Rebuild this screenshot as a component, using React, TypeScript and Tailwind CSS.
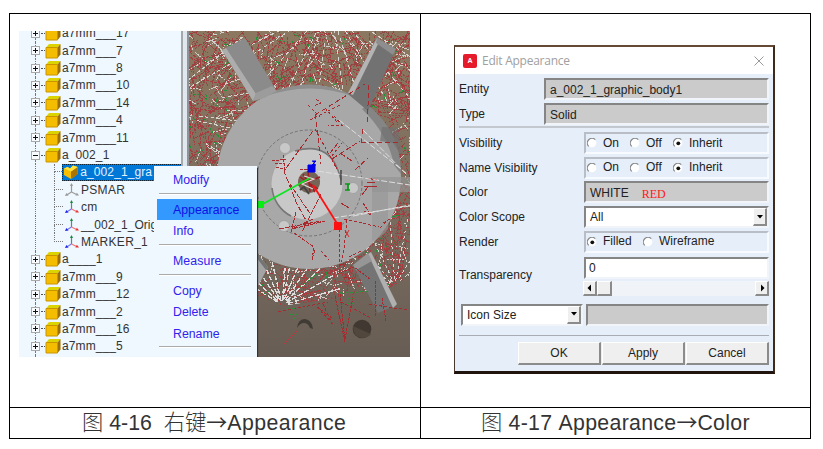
import React from 'react';

const ARIAL = "font-['Liberation_Sans',Arial,sans-serif]";

/* ---------- model tree ---------- */

function PartIcon() {
  return (
    <svg className="h-4 w-4 shrink-0" viewBox="0 0 16 16">
      <path d="M1 4.5 4 1h11.5L12.500 4.500z" fill="#dcd400" />
      <path d="M12.500 4.500 15.500 1v10.500l-3 3.500z" fill="#9c7000" />
      <path d="M1 4.500h11.500V15H1z" fill="#f5bd00" stroke="#c99400" strokeWidth="1" />
    </svg>
  );
}

function SolidIcon() {
  return (
    <svg className="h-4 w-4 shrink-0" viewBox="0 0 16 16">
      <path d="M1 4.500 4.500 3 7 4.500 10 1.500 14.500 3v7L8 15 1 11z" fill="#f8bf00" />
      <path d="M8 7.500 14.500 3v7.500L8 15z" fill="#a97400" />
      <path d="M1 4.500 4.500 3 7 4.500 10 1.500 14.500 3 8 7.500z" fill="#ffe23a" />
    </svg>
  );
}

function AxesIcon({ muted = false }: { muted?: boolean }) {
  return (
    <svg className="h-4 w-4 shrink-0" viewBox="0 0 16 16" fill="none" strokeWidth="1.2">
      <path d="M7.500 10V2" stroke={muted ? '#9a9a9a' : '#3c9a78'} />
      <path d="M6 4 7.500 1 9 4z" fill={muted ? '#999' : '#168a3a'} />
      <path d="M7.500 10 3 12.800" stroke={muted ? '#9a9a9a' : '#7777ee'} />
      <path d="M1 14l1.300-3L4.600 13.500z" fill={muted ? '#999' : '#2222ee'} />
      <path d="M7.500 10l5 2.500" stroke={muted ? '#9a9a9a' : '#ee7777'} />
      <path d="M15 13.500l-3.600 0 1.500-2.700z" fill={muted ? '#999' : '#ee3030'} />
    </svg>
  );
}

function PartRow({ name, open = false }: { name: string; open?: boolean }) {
  return (
    <div className="flex h-[17.4px] shrink-0 items-center">
      <div className="flex h-full w-[34px] items-center pl-[12px]">
        <div className="flex h-full w-[9px] flex-col items-center">
          <div className="w-px flex-1 border-l border-dotted border-[#777]" />
          <svg className="h-[9px] w-[9px] shrink-0" viewBox="0 0 9 9" shapeRendering="crispEdges">
            <path d="M.5.5h8v8h-8z" fill="#f8fbff" stroke="#aaa" />
            <path d={open ? 'M2 4.500h5' : 'M2 4.500h5M4.500 2v5'} stroke="#111" />
          </svg>
          <div className="w-px flex-1 border-l border-dotted border-[#777]" />
        </div>
        <div className="ml-px w-[4px] border-t border-dotted border-[#555]" />
      </div>
      <div className="-ml-[8px] flex w-[17px]"><PartIcon /></div>
      <span className="whitespace-pre pt-px tracking-[0.1px]">{name}</span>
    </div>
  );
}

function ChildRow({ name, kind, last = false }: { name: string; kind: 'solid' | 'muted' | 'axes'; last?: boolean }) {
  return (
    <div className="flex h-[17.4px] shrink-0 items-center">
      <div className="ml-[16px] h-full w-[19px] border-l border-dotted border-[#777]" />
      <div className="flex h-full w-[9px] flex-col">
        <div className="h-1/2 border-b border-l border-dotted border-[#777]" />
        <div className={last ? 'h-1/2' : 'h-1/2 border-l border-dotted border-[#777]'} />
      </div>
      {kind === 'solid' ? (
        <div className="flex h-[17px] w-[122px] items-center border border-dotted border-[#123] bg-[#0078d7] text-[#e4f1ff]">
          <SolidIcon />
          <span className="whitespace-pre pt-px pl-px tracking-[0.1px]">{name}</span>
        </div>
      ) : (
        <>
          <div className="ml-px flex w-[17px]"><AxesIcon muted={kind === 'muted'} /></div>
          <span className={`whitespace-pre pt-px ${name.startsWith('__') ? 'tracking-normal' : 'tracking-[0.3px]'}`}>{name}</span>
        </>
      )}
    </div>
  );
}

function ModelTree() {
  return (
    <div className="h-full w-[162px] shrink-0 overflow-hidden bg-[#eff7ff]">
      <div className="-mt-[6.4px] flex flex-col text-[12px] leading-[17px] text-[#333]">
        <PartRow name="a7mm___17" />
        <PartRow name="a7mm___7" />
        <PartRow name="a7mm___8" />
        <PartRow name="a7mm___10" />
        <PartRow name="a7mm___14" />
        <PartRow name="a7mm___4" />
        <PartRow name="a7mm___11" />
        <PartRow name="a_002_1" open />
        <ChildRow name="a_002_1_gra" kind="solid" />
        <ChildRow name="PSMAR" kind="muted" />
        <ChildRow name="cm" kind="axes" />
        <ChildRow name="__002_1_Orig" kind="axes" />
        <ChildRow name="MARKER_1" kind="axes" last />
        <PartRow name="a____1" />
        <PartRow name="a7mm___9" />
        <PartRow name="a7mm___12" />
        <PartRow name="a7mm___2" />
        <PartRow name="a7mm___16" />
        <PartRow name="a7mm___5" />
        <PartRow name="" />
      </div>
    </div>
  );
}

/* ---------- 3D view ---------- */

function makeRandom(seed: number) {
  let s = seed;
  return () => {
    s = (s * 1664525 + 1013904223) % 4294967296;
    return s / 4294967296;
  };
}

function strokes(count: number, seed: number, min: number, max: number) {
  const rnd = makeRandom(seed);
  let d = '';
  for (let i = 0; i < count; i++) {
    const x = 186 + rnd() * 226;
    const y = 29 + rnd() * 280;
    const a = rnd() * Math.PI;
    const l = min + rnd() * (max - min);
    d += `M${x.toFixed(1)} ${y.toFixed(1)}l${(Math.cos(a) * l).toFixed(1)} ${(Math.sin(a) * l).toFixed(1)}`;
  }
  return d;
}

function fan(cx: number, cy: number, from: number, to: number, n: number, r0: number, r1: number) {
  const rnd = makeRandom(n * 31 + 5);
  let d = '';
  for (let i = 0; i < n; i++) {
    const a = ((from + ((to - from) * (i + rnd() * 0.6)) / (n - 1)) * Math.PI) / 180;
    const s = r0 + rnd() * r0;
    d += `M${(cx + Math.cos(a) * s).toFixed(1)} ${(cy + Math.sin(a) * s).toFixed(1)}L${(cx + Math.cos(a) * r1).toFixed(1)} ${(cy + Math.sin(a) * r1).toFixed(1)}`;
  }
  return d;
}

const RED_STROKES = strokes(1300, 7, 4, 24);
const DULL_STROKES = strokes(900, 23, 4, 20);
const WHITE_STROKES = strokes(480, 91, 3, 18);
const GREEN_STROKES = strokes(140, 45, 3, 8);

function ModelView() {
  return (
    <svg className="h-[326px] w-[221px] shrink-0" viewBox="189 31 221 326">
      <defs>
        <linearGradient id="ground" x1="0" y1="0" x2="0" y2="1">
          <stop offset="0" stopColor="#8c7860" />
          <stop offset=".7" stopColor="#75695d" />
          <stop offset="1" stopColor="#685d54" />
        </linearGradient>
        <clipPath id="mesh">
          <path d="M189 31H410V276L388 289 362 293 330 299 282 306 255 294 189 290z" />
        </clipPath>
      </defs>
      <path d="M189 31h221v326H189z" fill="url(#ground)" />
      <g clipPath="url(#mesh)" fill="none" shapeRendering="crispEdges">
        <path d={DULL_STROKES} stroke="#8f4a47" strokeDasharray="2 1" />
        <path d={RED_STROKES} stroke="#a53c40" strokeDasharray="3 1" />
        <path d={WHITE_STROKES} stroke="#d2cbc8" strokeDasharray="2 1" />
        <path d={fan(282, 305, -150, -10, 13, 4, 60)} stroke="#dedede" strokeDasharray="5 2" strokeWidth="1.400" />
        <path d={fan(330, 5, 30, 165, 12, 20, 120)} stroke="#d8d4d2" strokeDasharray="4 3" />
        <path d={fan(150, 110, -40, 30, 9, 40, 120)} stroke="#d8d4d2" strokeDasharray="4 2" />
        <path d={fan(395, 285, -150, -30, 8, 4, 70)} stroke="#d8d4d2" strokeDasharray="3 3" />
        <path d={GREEN_STROKES} stroke="#219337" strokeDasharray="3 1" />
      </g>

      <circle cx="309" cy="177" r="92" fill="#a8a8a8" />
      <path d="M263 97Q310 72 355 97Q310 80 263 97z" fill="#8e8e8e" />
      <path d="M368 105Q401 132 401 174L394 165Q388 134 362 109z" fill="#858585" />
      <path d="M382 127l16 1 4 28-9-13-13-2z" fill="#707070" opacity=".7" />
      <path d="M372 177h38v15h-38z" fill="#949494" opacity=".7" />
      <path d="M372 180v61q9-3 16-12v-49z" fill="#969696" opacity=".6" />

      <path d="M222 50l23-12 30 50-9 9-13 4z" fill="#8b8b8b" />
      <path d="M222 50l4-2 30 46-3 7z" fill="#adadad" />
      <path d="M253 101l3-8 16-7 5 5-13 7z" fill="#9c9c9c" />
      <path d="M377 38l19 11-28 62-20-17z" fill="#727272" />
      <path d="M377 38l3 2-27 55-5-2z" fill="#b4b4b4" />
      <path d="M377 38l19 11-3 6-17-12z" fill="#8e8e8e" />
      <path d="M353 265l17-12 27 52-19 8z" fill="#747474" />
      <path d="M368 254l3-2 26 52-4 4z" fill="#b0b0b0" />
      <path d="M353 265l15-12 4 8-16 9z" fill="#969696" />
      <path d="M256 252l12 15-12 23z" fill="#a4a4a4" />
      <path d="M257 253l11 14-2 3-10-13z" fill="#747474" />

      <circle cx="309" cy="183" r="53" fill="none" stroke="#666" strokeDasharray="3 2" strokeWidth=".8" />
      <circle cx="307" cy="184" r="35.500" fill="#c8c8c8" />
      <path d="M272 188A35 35 0 0 0 291 216M295 151Q332 140 341 180" fill="none" stroke="#777" strokeWidth="1.600" />
      <path d="M341 170v15" stroke="#444" strokeWidth="1.500" />
      <g fill="#c8c8c8" stroke="#999" strokeWidth=".7">
        <circle cx="285" cy="148" r="5.500" />
        <circle cx="353" cy="188" r="5.500" />
        <circle cx="284" cy="226" r="5.500" />
      </g>

      <g fill="none" stroke="#a92a2e" strokeWidth="1" shapeRendering="crispEdges">
        <path d="M315 114l3 24 3 26M315 115l50-31M369 85l-2 40M361 142l2-16M361 142h24l16 1" strokeDasharray="5 3" />
        <path d="M308 105l12 12M310 120l30-15M325 108l12 14M334 116l8 9h-14M316 99l5 4-8 3" strokeDasharray="3 2" />
        <path d="M313 131l-29 40 12 31 13 24M332 159l28-18M355 170l13-12M338 143l-8 10M340 153l12 8" strokeDasharray="6 2" />
        <path d="M315 129l22 40-6-12 11-14" strokeDasharray="3 2" />
        <path d="M272 161l14-2m-11 4 9 1m-8 3 10 3M283 155l2 14" strokeDasharray="3 1" />
        <path d="M315 170l-15-1M321 194l-19 38M290 184l21 31M279 229l42-8m-8-2-21 10 33-8M296 212l-5 20" strokeDasharray="5 1" />
        <path d="M294 233l20 14-2 13 3-11m6 2 8 9M339 229v43M347 220l-3 30-5 20M349 257l12-6M344 219l35 8M380 228l7-7m-4 2 7-4M363 203l8 12-7-4" strokeDasharray="3 2" />
        <path d="M337 274l17-7 16 12M341 265l5-2-3 6M344 277l9 2m22 2v35m7-18 4 23m-69-14 15 11M335 296l10 46-5-49M353 297l-8 42" strokeDasharray="3 1" />
        <path d="M298 330l-15 15" stroke="#bd373a" />
        <path d="M278 312l50-10M317 307l16 17m-10-20 9 20m9-22 15 8 15 8m-2-14 25 4 15 2" strokeDasharray="3 2" />
        <path d="M366 178l11 2M367 182l8 1M364 186l13 1M362 195l6-8M341 203l8 5" />
      </g>
      <g fill="none" strokeDasharray="6 2">
        <path d="M310 170l100 15M333 218l77-12M353 216l57-11M339 120l67 53M363 130l44 45" stroke="#dedede" />
      </g>
      <g fill="none" stroke="#279338" strokeDasharray="3 2" shapeRendering="crispEdges">
        <path d="M345 293l24-2m-22 7h6m-6 5h6M287 308h8m-5 6h7m-4 4h4M317 274l-18 14" />
      </g>

      <circle cx="309" cy="182" r="11" fill="#766456" />
      <path d="M300 177l18 12M303 174l12 18M298 185l22-8M308 171l2 21" stroke="#a51d22" strokeWidth="1.500" />
      <path d="M304 176l10 3-12 5 11 5" fill="none" stroke="#ddd" strokeWidth="1.200" />
      <path d="M300 190l4-3 5 7" fill="none" stroke="#444" strokeWidth="2" />
      <path d="M310 178l-49 27" stroke="#0de322" strokeWidth="1.600" />
      <path d="M257 201h7v7h-7z" fill="#08ed12" />
      <path d="M313 185l25 40" stroke="#ff1111" strokeWidth="1.800" />
      <path d="M334 222h8v8h-8z" fill="#ff1010" />
      <path d="M308 165h7v7h-7zM312 161h4l-4 4h4" fill="#0000e8" stroke="#0000e8" />
      <path d="M345 184h5m-2 0v6m-3 0h5" stroke="#059b16" strokeWidth="1.700" />
      <path d="M345 230l4 7m0-7-4 7" stroke="#ce2e2e" />
      <path d="M297 328q1-9 8-9 7 1 8 10l-3-1q-2-5-6-5-4 0-7 5z" fill="#403b35" />
      <circle cx="362" cy="329" r="9.300" fill="#403831" />
      <path d="M353 326l18 8q-3 4-9 4-9-1-9-12z" fill="#52473d" />
    </svg>
  );
}

/* ---------- context menu ---------- */

const Rule = () => <div className="ml-[2px] w-[92px] border-t border-[#aaa] shadow-[0_1px_0_#fff]" />;

function ContextMenu() {
  return (
    <div className="absolute left-[135px] top-[135px] flex h-[191px] w-[103px] flex-col bg-[#eff7ff] pl-[3px] text-[12.3px] leading-[20px] text-[#3222ee] shadow-[2px_1px_1px_-1px_#333]">
      <div className="mt-[4px] pl-[16px]">Modify</div>
      <div className="h-[9px] pt-[3px]"><Rule /></div>
      <div className="h-[21px] w-[95px] bg-[#3399ff] pl-[16px] leading-[22px] text-[#1010e8]">Appearance</div>
      <div className="mt-[1px] pl-[16px]">Info</div>
      <div className="h-[10px] pt-[3px]"><Rule /></div>
      <div className="pl-[16px] tracking-[0.1px]">Measure</div>
      <div className="h-[10px] pt-[3px]"><Rule /></div>
      <div className="pl-[16px]">Copy</div>
      <div className="mt-px pl-[16px]">Delete</div>
      <div className="mt-[2px] pl-[16px]">Rename</div>
      <div className="pt-[2px]"><Rule /></div>
    </div>
  );
}

/* ---------- appearance dialog ---------- */

const SUNKEN = 'border-2 border-t-[#858585] border-l-[#858585] border-r-[#f1f5fa] border-b-[#f1f5fa]';
const GROUP = 'border-2 border-t-[#b9bec6] border-l-[#b9bec6] border-r-[#f7fafe] border-b-[#f7fafe]';
const RAISED = 'border-t border-l border-r-2 border-b-2 border-t-white border-l-white border-r-[#8b8b8b] border-b-[#8b8b8b] bg-[#efefef]';

function Radio({ label, on = false, width }: { label: string; on?: boolean; width: string }) {
  return (
    <div className={`-ml-[3px] mr-[3px] flex items-center ${width}`}>
      <svg className="mr-[6px] h-[10px] w-[10px] shrink-0" viewBox="0 0 10 10">
        <circle cx="5" cy="5" r="4.300" fill="#fff" />
        <path d="M1.700 8.300A4.500 4.500 0 0 1 8.300 1.700" fill="none" stroke="#888" strokeWidth="1.200" />
        {on && <circle cx="5.300" cy="5.300" r="1.900" fill="#111" />}
      </svg>
      {label}
    </div>
  );
}

function Field({ label, className, children }: { label: string; className: string; children?: React.ReactNode }) {
  return (
    <div className="flex h-[22px] items-center justify-between">
      <span className="whitespace-nowrap pt-px">{label}</span>
      <div className={`flex h-[22px] items-center pl-[4px] ${className}`}>{children}</div>
    </div>
  );
}

function VisibilityRadios() {
  return (
    <>
      <Radio label="On" width="w-[43px]" />
      <Radio label="Off" width="w-[43px]" />
      <Radio label="Inherit" on width="w-[70px]" />
    </>
  );
}

function Arrow({ dir }: { dir: 'down' | 'left' | 'right' }) {
  const d = dir === 'down' ? 'M1 2h6L4 5.500z' : dir === 'left' ? 'M5 .5v7L1.500 4z' : 'M3 .5v7L6.500 4z';
  return (
    <div className={`flex h-full w-[14px] shrink-0 items-center justify-center ${RAISED}`}>
      <svg className="h-2 w-2" viewBox="0 0 8 8"><path d={d} fill="#000" /></svg>
    </div>
  );
}

function Button({ label }: { label: string }) {
  return <div className={`flex h-[23px] w-[83px] items-center justify-center pt-px ${RAISED}`}>{label}</div>;
}

function AppearanceDialog() {
  return (
    <div className="flex h-[329px] w-[321px] flex-col border-b-[3px] border-l border-r-[2px] border-t-2 border-b-[#20140f] border-l-[#49382c] border-r-[#3f2a1c] border-t-[#644a34] bg-[#e6eff9] text-[12px] leading-[15px] text-[#222]">
      <div className="flex h-[27px] shrink-0 items-center bg-white pl-[8px] pr-[9px]">
        <div className="flex h-[14px] w-[14px] items-center justify-center rounded-[2px] bg-[#e51b2c] text-[7px] font-bold leading-none text-white">A</div>
        <span className="ml-[5px] font-['Open_Sans','Noto_Sans',sans-serif] text-[12px] tracking-[-0.25px] text-[#a0a0a0]">Edit Appearance</span>
        <svg className="ml-auto h-[10px] w-[10px]" viewBox="0 0 10 10"><path d="M.5.5l9 9m0-9-9 9" stroke="#999" fill="none" /></svg>
      </div>
      <div className="flex flex-col pl-[4px] pr-[4px] pt-[4px]">
        <div className="flex flex-col gap-[3px]">
          <Field label="Entity" className={`w-[225px] bg-[#cbcbcb] pt-[2px] ${SUNKEN}`}>a_002_1_graphic_body1</Field>
          <Field label="Type" className={`w-[225px] bg-[#cbcbcb] pt-[2px] ${SUNKEN}`}>Solid</Field>
        </div>
        <div className="mb-[4px] mt-px border-t-2 border-[#c3c8cf]" />
        <div className="flex flex-col gap-[2.7px]">
          <Field label="Visibility" className={`w-[185px] ${GROUP}`}><VisibilityRadios /></Field>
          <Field label="Name Visibility" className={`w-[185px] ${GROUP}`}><VisibilityRadios /></Field>
          <Field label="Color" className={`w-[185px] bg-[#cbcbcb] ${SUNKEN}`}>
            <span className="pt-[3px]">WHITE</span>
            <span className="ml-[13px] pt-[4px] font-['Liberation_Serif',serif] text-[12px] text-[#ff1818]">RED</span>
          </Field>
          <Field label="Color Scope" className={`w-[185px] bg-white ${SUNKEN}`}>
            <span className="mr-auto">All</span><Arrow dir="down" />
          </Field>
          <Field label="Render" className={`w-[185px] ${GROUP}`}>
            <Radio label="Filled" on width="w-[56px]" />
            <Radio label="Wireframe" width="w-[90px]" />
          </Field>
        </div>
        <div className="mt-[4px] flex h-[40px] items-center justify-between">
          <span className="pb-[2px]">Transparency</span>
          <div className="flex w-[186px] flex-col">
            <div className={`ml-px flex h-[22px] items-center bg-white pl-[3px] pt-px ${SUNKEN}`}>0</div>
            <div className="mt-[2px] flex h-[15px] bg-[#f0f4f9]">
              <Arrow dir="left" />
              <div className={`h-full w-[15px] ${RAISED}`} />
              <div className="flex-1" />
              <Arrow dir="right" />
            </div>
          </div>
        </div>
        <div className="mt-[7px] flex h-[22px] justify-between pl-[2px]">
          <div className={`flex w-[122px] items-center bg-white pl-[4px] ${SUNKEN}`}>
            <span className="mr-auto pt-px">Icon Size</span><Arrow dir="down" />
          </div>
          <div className={`w-[183px] bg-[#cbcbcb] ${SUNKEN}`} />
        </div>
        <div className="mt-[9px] border-t border-[#a9adb3]" />
        <div className="mt-[6px] flex justify-end gap-px">
          <Button label="OK" />
          <Button label="Apply" />
          <Button label="Cancel" />
        </div>
      </div>
    </div>
  );
}

/* ---------- page ---------- */

function Cjk({ children }: { children: string }) {
  return <span className="font-['Noto_Sans_CJK_SC',sans-serif] text-[21.3px] font-light">{children}</span>;
}

function LongArrow() {
  return <span className="font-['Noto_Sans_CJK_SC',sans-serif] text-[21px]">→</span>;
}

export default function App() {
  return (
    <div className={`h-[449px] w-[823px] overflow-hidden bg-white pl-[9px] pt-[13px] ${ARIAL}`}>
      <div className="grid h-[426px] w-[802px] grid-cols-[411px_389px] grid-rows-[394px_30px] border border-black">
        <div className="border-b border-r border-black pl-[9px] pt-[17px]">
          <div className="relative flex h-[326px] w-[391px] overflow-hidden bg-[#eff7ff]">
            <ModelTree />
            <div className="flex w-[8px] shrink-0 border-l-2 border-r-2 border-l-[#a5a9ae] border-r-[#8f9296] bg-[#e0e7ef]" />
            <ModelView />
            <ContextMenu />
          </div>
        </div>
        <div className="border-b border-black pl-[33px] pt-[31px]">
          <AppearanceDialog />
        </div>
        <div className="flex items-center whitespace-pre border-r border-black pb-[2px] pl-[72px] text-[21.3px] leading-[28px] text-[#333]">
          <span><Cjk>图</Cjk> 4-16  <Cjk>右键</Cjk><LongArrow /><span className="tracking-[0.4px]">Appearance</span></span>
        </div>
        <div className="flex items-center whitespace-pre pb-[2px] pl-[60px] text-[21.3px] leading-[28px] text-[#333]">
          <span><Cjk>图</Cjk><span className="tracking-[0.3px]"> 4-17 Appearance</span><LongArrow /><span className="tracking-[0.3px]">Color</span></span>
        </div>
      </div>
    </div>
  );
}
